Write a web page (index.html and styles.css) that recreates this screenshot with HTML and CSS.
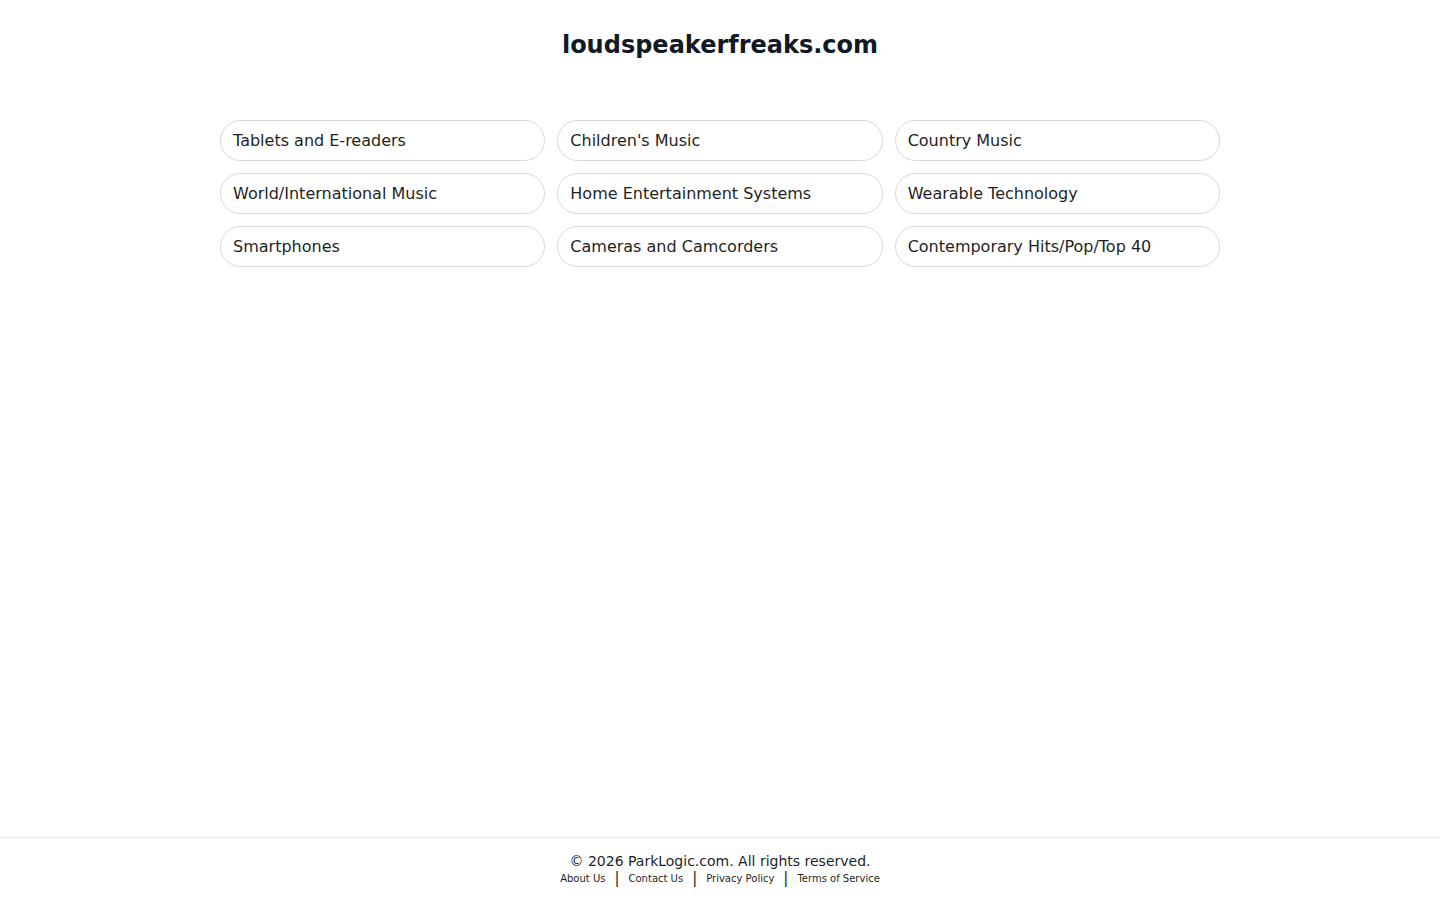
FILE: index.html
```html
<!DOCTYPE html>
<html lang="en">
<head>
<meta charset="utf-8">
<title>loudspeakerfreaks.com</title>
<link rel="stylesheet" href="styles.css">
</head>
<body>
<div class="page">
  <header class="header">
    <h1 class="title">loudspeakerfreaks.com</h1>
  </header>
  <main class="main">
    <div class="grid">
      <a class="pill" href="#">Tablets and E-readers</a>
      <a class="pill" href="#">Children's Music</a>
      <a class="pill" href="#">Country Music</a>
      <a class="pill" href="#">World/International Music</a>
      <a class="pill" href="#">Home Entertainment Systems</a>
      <a class="pill" href="#">Wearable Technology</a>
      <a class="pill" href="#">Smartphones</a>
      <a class="pill" href="#">Cameras and Camcorders</a>
      <a class="pill" href="#">Contemporary Hits/Pop/Top 40</a>
    </div>
  </main>
  <footer class="footer">
    <div class="copy">© 2026 ParkLogic.com. All rights reserved.</div>
    <div class="links">
      <a href="#">About Us</a><span class="sep">|</span><a href="#">Contact Us</a><span class="sep">|</span><a href="#">Privacy Policy</a><span class="sep">|</span><a href="#">Terms of Service</a>
    </div>
  </footer>
</div>
</body>
</html>
```
FILE: styles.css
```css
* { box-sizing: border-box; }
html, body { margin: 0; padding: 0; }
body {
  font-family: "DejaVu Sans", Verdana, sans-serif;
  color: #1f2937;
  background: #ffffff;
}
.page {
  min-height: 100vh;
  display: flex;
  flex-direction: column;
}
.header {
  padding-top: 27px;
  text-align: center;
}
.title {
  margin: 0;
  font-size: 24px;
  line-height: 36px;
  font-weight: bold;
  color: #111827;
}
.main {
  flex: 1;
  padding-top: 57px;
}
.grid {
  width: 1000px;
  margin: 0 auto;
  display: grid;
  grid-template-columns: repeat(3, 1fr);
  gap: 12px;
}
.pill {
  display: block;
  height: 41px;
  line-height: 39px;
  padding: 0 12px;
  border: 1px solid #d9d9d9;
  border-radius: 21px;
  font-size: 16px;
  color: #1f1f1f;
  text-decoration: none;
  white-space: nowrap;
}
.footer {
  border-top: 1px solid #e5e5e5;
  padding: 13px 0 14px;
  text-align: center;
}
.copy {
  font-size: 14px;
  line-height: 20px;
  color: #1f1f1f;
}
.links {
  font-size: 10px;
  line-height: 15px;
  display: flex;
  justify-content: center;
  align-items: center;
}
.links a {
  color: #1f1f1f;
  text-decoration: none;
}
.sep {
  font-size: 15px;
  line-height: 15px;
  margin: 0 9px;
  color: #1f1f1f;
}
```
